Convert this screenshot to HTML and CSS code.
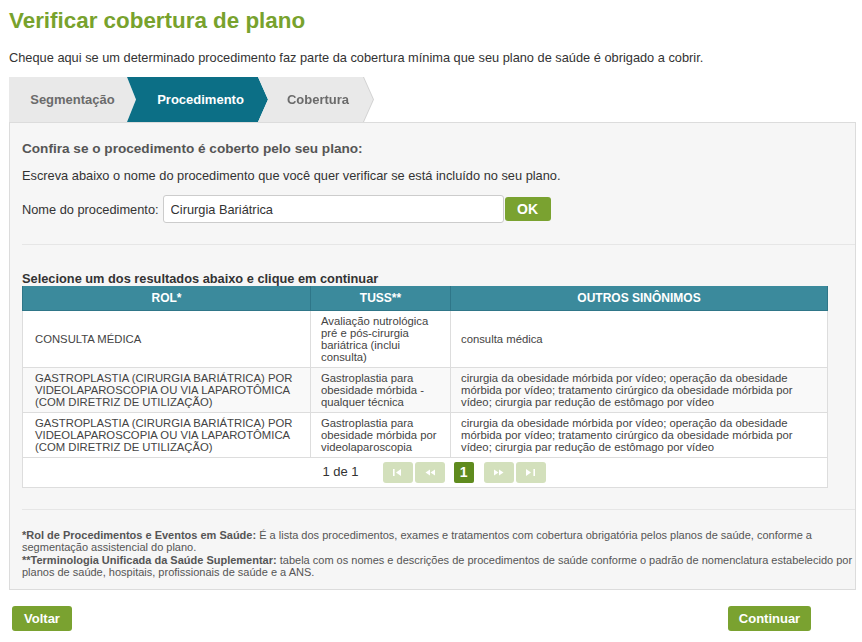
FILE: index.html
```html
<!DOCTYPE html>
<html lang="pt-BR">
<head>
<meta charset="utf-8">
<title>Verificar cobertura de plano</title>
<link rel="stylesheet" href="styles.css">
</head>
<body>
<div class="page">
  <h1 class="title">Verificar cobertura de plano</h1>
  <p class="intro">Cheque aqui se um determinado procedimento faz parte da cobertura mínima que seu plano de saúde é obrigado a cobrir.</p>

  <div class="steps">
    <div class="step step-first">Segmentação</div>
    <div class="step step-active">Procedimento</div>
    <div class="step-wrap"><div class="step step-last">Cobertura</div></div>
  </div>

  <div class="panel">
    <h3 class="panel-title">Confira se o procedimento é coberto pelo seu plano:</h3>
    <p class="panel-text">Escreva abaixo o nome do procedimento que você quer verificar se está incluído no seu plano.</p>
    <div class="search-row">
      <label class="search-label">Nome do procedimento:</label>
      <input class="search-input" type="text" value="Cirurgia Bariátrica">
      <button class="btn btn-ok">OK</button>
    </div>
    <div class="sep sep-top"></div>

    <div class="results-title">Selecione um dos resultados abaixo e clique em continuar</div>
    <table class="results">
      <colgroup>
        <col class="c-rol"><col class="c-tuss"><col class="c-sin">
      </colgroup>
      <thead>
        <tr><th>ROL*</th><th>TUSS**</th><th>OUTROS SINÔNIMOS</th></tr>
      </thead>
      <tbody>
        <tr class="r1">
          <td class="td-rol">CONSULTA MÉDICA</td>
          <td>Avaliação nutrológica pré e pós-cirurgia bariátrica (inclui consulta)</td>
          <td>consulta médica</td>
        </tr>
        <tr class="r2 alt">
          <td class="td-rol">GASTROPLASTIA (CIRURGIA BARIÁTRICA) POR VIDEOLAPAROSCOPIA OU VIA LAPAROTÔMICA (COM DIRETRIZ DE UTILIZAÇÃO)</td>
          <td>Gastroplastia para obesidade mórbida - qualquer técnica</td>
          <td>cirurgia da obesidade mórbida por vídeo; operação da obesidade mórbida por vídeo; tratamento cirúrgico da obesidade mórbida por vídeo; cirurgia par redução de estômago por vídeo</td>
        </tr>
        <tr class="r2">
          <td class="td-rol">GASTROPLASTIA (CIRURGIA BARIÁTRICA) POR VIDEOLAPAROSCOPIA OU VIA LAPAROTÔMICA (COM DIRETRIZ DE UTILIZAÇÃO)</td>
          <td>Gastroplastia para obesidade mórbida por videolaparoscopia</td>
          <td>cirurgia da obesidade mórbida por vídeo; operação da obesidade mórbida por vídeo; tratamento cirúrgico da obesidade mórbida por vídeo; cirurgia par redução de estômago por vídeo</td>
        </tr>
        <tr class="pager-row">
          <td colspan="3">
            <div class="pager">
              <span class="pager-count">1 de 1</span>
              <span class="pg pg-first"><svg width="9" height="7" viewBox="0 0 9 7"><rect x="0" y="0" width="1.6" height="7" fill="#fff"/><polygon points="8,0 8,7 3,3.5" fill="#fff"/></svg></span>
              <span class="pg pg-prev"><svg width="10" height="7" viewBox="0 0 10 7"><polygon points="5,0.5 5,6.5 0.5,3.5" fill="#fff"/><polygon points="10,0.5 10,6.5 5.5,3.5" fill="#fff"/></svg></span>
              <span class="pg-current">1</span>
              <span class="pg pg-next"><svg width="10" height="7" viewBox="0 0 10 7"><polygon points="0,0.5 0,6.5 4.5,3.5" fill="#fff"/><polygon points="5,0.5 5,6.5 9.5,3.5" fill="#fff"/></svg></span>
              <span class="pg pg-last"><svg width="9" height="7" viewBox="0 0 9 7"><polygon points="0,0 0,7 5,3.5" fill="#fff"/><rect x="7.4" y="0" width="1.6" height="7" fill="#fff"/></svg></span>
            </div>
          </td>
        </tr>
      </tbody>
    </table>

    <div class="sep sep-bottom"></div>

    <p class="notes"><b>*Rol de Procedimentos e Eventos em Saúde:</b> É a lista dos procedimentos, exames e tratamentos com cobertura obrigatória pelos planos de saúde, conforme a segmentação assistencial do plano.<br><b>**Terminologia Unificada da Saúde Suplementar:</b> tabela com os nomes e descrições de procedimentos de saúde conforme o padrão de nomenclatura estabelecido por planos de saúde, hospitais, profissionais de saúde e a ANS.</p>
  </div>

  <div class="actions">
    <button class="btn btn-nav btn-back">Voltar</button>
    <button class="btn btn-nav btn-next">Continuar</button>
  </div>
</div>
</body>
</html>
```

FILE: styles.css
```css
* { box-sizing: border-box; }

body {
  margin: 0;
  background: #ffffff;
  font-family: "Liberation Sans", Arial, sans-serif;
  color: #333333;
}

.page {
  padding: 0 0 0 9px;
  width: 856px;
}

.title {
  margin: 8px 0 0 0;
  font-size: 22.4px;
  line-height: 25px;
  font-weight: bold;
  color: #78a22d;
}

.intro {
  margin: 17px 0 0 0;
  font-size: 12.8px;
  line-height: 15px;
  color: #333333;
}

/* ---------- steps ---------- */
.steps {
  display: flex;
  margin-top: 12px;
  height: 45px;
}

.step {
  height: 45px;
  line-height: 45px;
  font-size: 13px;
  font-weight: bold;
  color: #6b6b6b;
  background: #e9e9e9;
  text-align: center;
}

.step-first {
  width: 127px;
  padding-left: 4px;
  padding-right: 4px;
  clip-path: polygon(0 0, calc(100% - 9px) 0, 100% 50%, calc(100% - 9px) 100%, 0 100%);
}

.step-active {
  width: 141px;
  margin-left: -9px;
  padding-left: 6px;
  background: #0c6f86;
  color: #ffffff;
  clip-path: polygon(0 0, calc(100% - 10px) 0, 100% 50%, calc(100% - 10px) 100%, 0 100%, 9px 50%);
}

.step-wrap {
  margin-left: -10px;
  filter: drop-shadow(1px 0 0 #d2d2d2);
}

.step-last {
  width: 115px;
  padding-left: 5px;
  clip-path: polygon(0 0, calc(100% - 10px) 0, 100% 50%, calc(100% - 10px) 100%, 0 100%, 10px 50%);
}

/* ---------- panel ---------- */
.panel {
  width: 847px;
  background: #f6f6f6;
  border: 1px solid #dcdcdc;
  padding: 18px 0 10px 12px;
}

.panel-title {
  margin: 0;
  font-size: 13.6px;
  line-height: 15px;
  font-weight: bold;
  color: #555555;
}

.panel-text {
  margin: 12px 0 0 0;
  font-size: 12.8px;
  line-height: 15px;
  color: #333333;
}

.search-row {
  display: flex;
  align-items: center;
  margin-top: 12px;
  height: 28px;
}

.search-label {
  font-size: 12.8px;
  color: #333333;
}

.search-input {
  margin-left: 4px;
  width: 341px;
  height: 28px;
  border: 1px solid #cccccc;
  border-radius: 3px;
  background: #ffffff;
  padding: 0 7px;
  font-family: "Liberation Sans", Arial, sans-serif;
  font-size: 12.8px;
  color: #333333;
  outline: none;
}

.btn {
  border: none;
  border-radius: 3px;
  background: #7aa230;
  color: #ffffff;
  font-family: "Liberation Sans", Arial, sans-serif;
  font-weight: bold;
  cursor: pointer;
  padding: 0;
}

.btn-ok {
  margin-left: 1px;
  width: 46px;
  height: 24px;
  font-size: 14px;
}

.sep {
  height: 1px;
  background: #e6e6e6;
}

.sep-top {
  margin-top: 21px;
}

.results-title {
  margin-top: 26px;
  font-size: 12.8px;
  line-height: 15px;
  font-weight: bold;
  color: #333333;
}

/* ---------- table ---------- */
.results {
  width: 805px;
  border-collapse: collapse;
  table-layout: fixed;
  font-size: 11.3px;
  line-height: 12px;
}

.c-rol { width: 288px; }
.c-tuss { width: 140px; }
.c-sin { width: 377px; }

.results th {
  height: 24px;
  padding: 0;
  background: #3b8a9c;
  color: #ffffff;
  font-size: 12px;
  font-weight: bold;
  text-align: center;
  border-left: 1px solid #2f7688;
  border-right: 1px solid #2f7688;
  border-bottom: 1px solid #2f7688;
}

.results td {
  padding: 4px 10px;
  border: 1px solid #dddddd;
  background: #ffffff;
  color: #444444;
  vertical-align: middle;
}

.results td.td-rol {
  padding-left: 12px;
}

.results tr.alt td {
  background: #f9f9f9;
}

.results tr.r1 td { height: 56px; }
.results tr.r2 td { height: 45px; }

.results tr.pager-row td {
  height: 30px;
  padding: 0;
  background: #ffffff;
}

.pager {
  display: flex;
  align-items: center;
  justify-content: center;
  padding-left: 18px;
}

.pager-count {
  font-size: 13px;
  color: #333333;
  margin-right: 24px;
}

.pg {
  display: inline-flex;
  align-items: center;
  justify-content: center;
  width: 30px;
  height: 21px;
  background: #d3e0bc;
  border-radius: 3px;
}

.pg-prev { margin-left: 2px; }
.pg-last { margin-left: 2px; }

.pg-current {
  display: inline-flex;
  align-items: center;
  justify-content: center;
  width: 20px;
  height: 21px;
  margin: 0 10px 0 9px;
  background: #5f8b1e;
  border-radius: 2px;
  color: #ffffff;
  font-size: 14px;
  font-weight: bold;
}

.sep-bottom {
  margin-top: 21px;
}

.notes {
  margin: 19px 0 0 0;
  padding-right: 2px;
  font-size: 11px;
  line-height: 12.5px;
  color: #555555;
}

/* ---------- actions ---------- */
.actions {
  display: flex;
  justify-content: space-between;
  width: 847px;
  margin-top: 16px;
  padding: 0 45px 0 3px;
}

.btn-nav {
  height: 25px;
  font-size: 13px;
}

.btn-back { width: 60px; }
.btn-next { width: 83px; }
```
